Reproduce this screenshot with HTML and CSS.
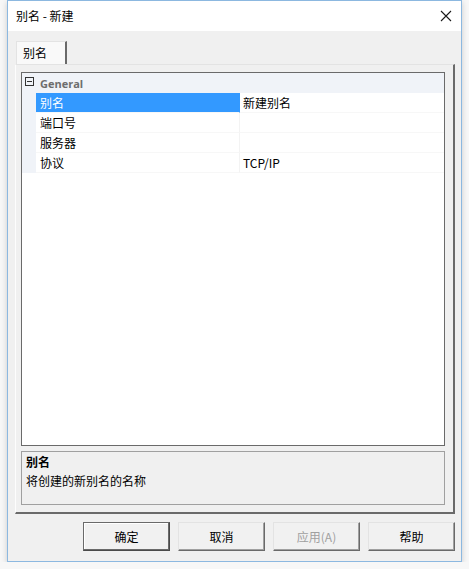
FILE: index.html
```html
<!DOCTYPE html>
<html>
<head>
    <meta charset="UTF-8">
    <title>别名 - 新建</title>
    <link rel="stylesheet" href="styles.css">
</head>
<body>
    <div class="window">
        <div class="titlebar">
            <span class="title">别名 - 新建</span>
            <svg class="close" width="12" height="12" viewBox="0 0 12 12">
                <path d="M1 1 L11 11 M11 1 L1 11" stroke="#1a1a1a" stroke-width="1.1" fill="none"/>
            </svg>
        </div>
        <div class="client">
            <div class="tabs">
                <div class="tab">别名</div>
            </div>
            <div class="page">
                <div class="grid">
                    <div class="cat">
                        <span class="toggle"></span>
                        <span class="cat-name">General</span>
                    </div>
                    <div class="row selected">
                        <span class="name">别名</span>
                        <span class="val">新建别名</span>
                    </div>
                    <div class="row">
                        <span class="name">端口号</span>
                        <span class="val"></span>
                    </div>
                    <div class="row">
                        <span class="name">服务器</span>
                        <span class="val"></span>
                    </div>
                    <div class="row">
                        <span class="name">协议</span>
                        <span class="val">TCP/IP</span>
                    </div>
                </div>
                <div class="desc">
                    <div class="desc-title">别名</div>
                    <div class="desc-text">将创建的新别名的名称</div>
                </div>
            </div>
            <div class="buttons">
                <button class="default">确定</button>
                <button>取消</button>
                <button disabled>应用(A)</button>
                <button>帮助</button>
            </div>
        </div>
    </div>
</body>
</html>
```

FILE: styles.css
```css
body {
    margin: 0;
    background: #f7f7f7;
    font-family: "Noto Sans CJK SC", "Noto Sans", sans-serif;
    font-size: 12px;
    color: #000;
}
.window {
    margin-left: 7px;
    width: 453px;
    height: 560px;
    border: 1px solid #8cb8e0;
    background: #f0f0f0;
    box-shadow: 0 2px 6px rgba(0, 0, 0, 0.18);
    display: flex;
    flex-direction: column;
}
.titlebar {
    height: 30px;
    background: #fff;
    display: flex;
    align-items: center;
    justify-content: space-between;
    padding: 0 9px 0 8px;
}
.title {
    font-size: 12px;
    line-height: 14px;
    margin-top: -1px;
}
.close {
    margin-top: -1px;
}
.client {
    flex: 1;
    padding: 10px 6px 0 7px;
    display: flex;
    flex-direction: column;
}
.tabs {
    display: flex;
    height: 23px;
    padding-left: 1px;
}
.tab {
    width: 51px;
    height: 23px;
    box-sizing: border-box;
    background: #f9f9f9;
    border-top: 1px solid #e3e3e3;
    border-left: 1px solid #e3e3e3;
    border-right: 2px solid #6a6a6a;
    padding: 3px 0 0 6px;
    line-height: 16px;
}
.page {
    width: 440px;
    height: 450px;
    box-sizing: border-box;
    border-top: 1px solid #e3e3e3;
    border-left: 1px solid #fdfdfd;
    border-right: 2px solid #6a6a6a;
    border-bottom: 2px solid #6a6a6a;
    padding: 7px 0 0 5px;
    display: flex;
    flex-direction: column;
}
.grid {
    width: 424px;
    height: 374px;
    box-sizing: border-box;
    border: 1px solid #6a6a6a;
    background: #fff;
}
.cat {
    height: 20px;
    background: #f0f3f8;
    display: flex;
    align-items: center;
}
.toggle {
    width: 7px;
    height: 7px;
    border: 1px solid #333;
    margin: 0 0 3px 3px;
    position: relative;
}
.toggle::after {
    content: "";
    position: absolute;
    left: 1px;
    right: 1px;
    top: 3px;
    height: 1px;
    background: #333;
}
.cat-name {
    font-family: "Open Sans", "Noto Sans", sans-serif;
    font-weight: bold;
    font-size: 11px;
    color: #6d6d6d;
    margin-left: 6px;
}
.row {
    height: 20px;
    display: flex;
    border-left: 14px solid #f0f3f8;
}
.row .name {
    width: 204px;
    padding-left: 4px;
    box-sizing: border-box;
    line-height: 20px;
    border-right: 1px solid #f3f3f3;
    border-bottom: 1px solid #f7f7f7;
}
.row .val {
    flex: 1;
    padding-left: 3px;
    line-height: 20px;
    border-bottom: 1px solid #f7f7f7;
}
.row.selected .name {
    background: #3399ff;
    color: #fff;
    border-right-color: #3399ff;
}
.desc {
    margin-top: 5px;
    width: 424px;
    height: 54px;
    box-sizing: border-box;
    border: 1px solid #a0a0a0;
    padding: 1px 0 0 4px;
}
.desc-title {
    font-weight: bold;
    line-height: 18px;
}
.desc-text {
    line-height: 20px;
}
.buttons {
    display: flex;
    justify-content: flex-end;
    gap: 8px;
    margin-top: 8px;
}
button {
    width: 87px;
    height: 29px;
    box-sizing: border-box;
    background: #f1f1f1;
    border: 1px solid;
    border-color: #e3e3e3 #6a6a6a #6a6a6a #e3e3e3;
    box-shadow: inset -1px -1px 0 #a0a0a0;
    font-family: "Noto Sans CJK SC", "Noto Sans", sans-serif;
    font-size: 12px;
    color: #000;
    padding: 0;
}
button.default {
    border-color: #6a6a6a #4a4a4a #4a4a4a #6a6a6a;
    box-shadow: inset -1px -1px 0 #6a6a6a, inset 1px 1px 0 #fff;
}
button:disabled {
    color: #a0a0a0;
}
```
